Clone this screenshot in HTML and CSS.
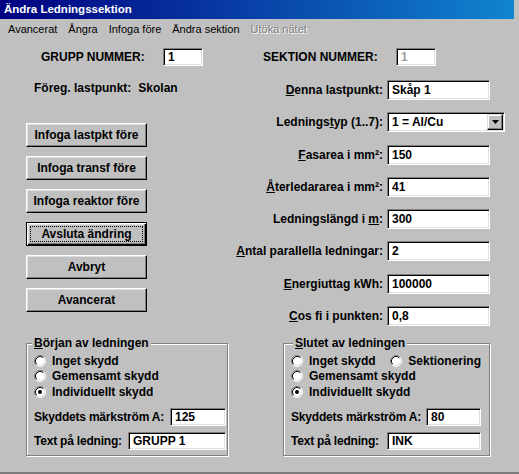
FILE: index.html
```html
<!DOCTYPE html>
<html>
<head>
<meta charset="utf-8">
<link rel="stylesheet" href="styles.css">
</head>
<body>
<div class="window">
  <div class="titlebar">Ändra Ledningssektion</div>
  <div class="menubar">
    <span>Avancerat</span><span>Ångra</span><span>Infoga före</span><span>Ändra sektion</span><span class="disabled">Utöka nätet</span>
  </div>
  <div class="top-row">
    <span class="grupp-lbl">GRUPP NUMMER:</span>
    <div class="field f-num">1</div>
    <span class="sektion-lbl">SEKTION NUMMER:</span>
    <div class="field f-num f-disabled">1</div>
  </div>
  <div class="main">
    <div class="left-col">
      <div class="prev"><span>Föreg. lastpunkt:</span><span class="prev-val">Skolan</span></div>
      <div class="buttons">
        <div class="btn">Infoga lastpkt före</div>
        <div class="btn">Infoga transf före</div>
        <div class="btn">Infoga reaktor före</div>
        <div class="btn btn-default"><span class="focus">Avsluta ändring</span></div>
        <div class="btn">Avbryt</div>
        <div class="btn">Avancerat</div>
      </div>
    </div>
    <div class="form">
      <label><u>D</u>enna lastpunkt:</label><div class="field">Skåp 1</div>
      <label>Lednings<u>t</u>yp (1..7):</label>
      <div class="field combo"><span class="combo-text">1 = Al/Cu</span><span class="arrow"><svg width="7" height="4" viewBox="0 0 7 4"><polygon points="0,0 7,0 3.5,4" fill="#000"/></svg></span></div>
      <label><u>F</u>asarea i mm²:</label><div class="field">150</div>
      <label><u>Å</u>terledararea i mm²:</label><div class="field">41</div>
      <label>Ledningslängd i <u>m</u>:</label><div class="field">300</div>
      <label><u>A</u>ntal parallella ledningar:</label><div class="field">2</div>
      <label><u>E</u>nergiuttag kWh:</label><div class="field">100000</div>
      <label><u>C</u>os fi i punkten:</label><div class="field">0,8</div>
    </div>
  </div>
  <div class="groups">
    <fieldset class="group g-left">
      <legend><u>B</u>örjan av ledningen</legend>
      <div class="radio-row">
        <span class="radio"><svg width="12" height="12" viewBox="0 0 12 12"><circle cx="6" cy="6" r="5" fill="#fff"/><path d="M2.11 9.89A5.5 5.5 0 0 1 9.89 2.11" fill="none" stroke="#808080"/><path d="M9.89 2.11A5.5 5.5 0 0 1 2.11 9.89" fill="none" stroke="#fff"/><path d="M2.82 9.18A4.5 4.5 0 0 1 9.18 2.82" fill="none" stroke="#000"/><path d="M9.18 2.82A4.5 4.5 0 0 1 2.82 9.18" fill="none" stroke="#dfdfdf"/></svg>Inget skydd</span>
      </div>
      <div class="radio-row">
        <span class="radio"><svg width="12" height="12" viewBox="0 0 12 12"><circle cx="6" cy="6" r="5" fill="#fff"/><path d="M2.11 9.89A5.5 5.5 0 0 1 9.89 2.11" fill="none" stroke="#808080"/><path d="M9.89 2.11A5.5 5.5 0 0 1 2.11 9.89" fill="none" stroke="#fff"/><path d="M2.82 9.18A4.5 4.5 0 0 1 9.18 2.82" fill="none" stroke="#000"/><path d="M9.18 2.82A4.5 4.5 0 0 1 2.82 9.18" fill="none" stroke="#dfdfdf"/></svg>Gemensamt skydd</span>
      </div>
      <div class="radio-row">
        <span class="radio"><svg width="12" height="12" viewBox="0 0 12 12"><circle cx="6" cy="6" r="5" fill="#fff"/><path d="M2.11 9.89A5.5 5.5 0 0 1 9.89 2.11" fill="none" stroke="#808080"/><path d="M9.89 2.11A5.5 5.5 0 0 1 2.11 9.89" fill="none" stroke="#fff"/><path d="M2.82 9.18A4.5 4.5 0 0 1 9.18 2.82" fill="none" stroke="#000"/><path d="M9.18 2.82A4.5 4.5 0 0 1 2.82 9.18" fill="none" stroke="#dfdfdf"/><circle cx="6" cy="6" r="2" fill="#000"/></svg>Individuellt skydd</span>
      </div>
      <div class="grow first-grow"><span>Skyddets märkström A:</span><div class="field w-amp-l">125</div></div>
      <div class="grow"><span>Text på ledning:</span><div class="field w-txt-l">GRUPP 1</div></div>
    </fieldset>
    <fieldset class="group g-right">
      <legend><u>S</u>lutet av ledningen</legend>
      <div class="radio-row">
        <span class="radio r-first"><svg width="12" height="12" viewBox="0 0 12 12"><circle cx="6" cy="6" r="5" fill="#fff"/><path d="M2.11 9.89A5.5 5.5 0 0 1 9.89 2.11" fill="none" stroke="#808080"/><path d="M9.89 2.11A5.5 5.5 0 0 1 2.11 9.89" fill="none" stroke="#fff"/><path d="M2.82 9.18A4.5 4.5 0 0 1 9.18 2.82" fill="none" stroke="#000"/><path d="M9.18 2.82A4.5 4.5 0 0 1 2.82 9.18" fill="none" stroke="#dfdfdf"/></svg>Inget skydd</span>
        <span class="radio"><svg width="12" height="12" viewBox="0 0 12 12"><circle cx="6" cy="6" r="5" fill="#fff"/><path d="M2.11 9.89A5.5 5.5 0 0 1 9.89 2.11" fill="none" stroke="#808080"/><path d="M9.89 2.11A5.5 5.5 0 0 1 2.11 9.89" fill="none" stroke="#fff"/><path d="M2.82 9.18A4.5 4.5 0 0 1 9.18 2.82" fill="none" stroke="#000"/><path d="M9.18 2.82A4.5 4.5 0 0 1 2.82 9.18" fill="none" stroke="#dfdfdf"/></svg>Sektionering</span>
      </div>
      <div class="radio-row">
        <span class="radio"><svg width="12" height="12" viewBox="0 0 12 12"><circle cx="6" cy="6" r="5" fill="#fff"/><path d="M2.11 9.89A5.5 5.5 0 0 1 9.89 2.11" fill="none" stroke="#808080"/><path d="M9.89 2.11A5.5 5.5 0 0 1 2.11 9.89" fill="none" stroke="#fff"/><path d="M2.82 9.18A4.5 4.5 0 0 1 9.18 2.82" fill="none" stroke="#000"/><path d="M9.18 2.82A4.5 4.5 0 0 1 2.82 9.18" fill="none" stroke="#dfdfdf"/></svg>Gemensamt skydd</span>
      </div>
      <div class="radio-row">
        <span class="radio"><svg width="12" height="12" viewBox="0 0 12 12"><circle cx="6" cy="6" r="5" fill="#fff"/><path d="M2.11 9.89A5.5 5.5 0 0 1 9.89 2.11" fill="none" stroke="#808080"/><path d="M9.89 2.11A5.5 5.5 0 0 1 2.11 9.89" fill="none" stroke="#fff"/><path d="M2.82 9.18A4.5 4.5 0 0 1 9.18 2.82" fill="none" stroke="#000"/><path d="M9.18 2.82A4.5 4.5 0 0 1 2.82 9.18" fill="none" stroke="#dfdfdf"/><circle cx="6" cy="6" r="2" fill="#000"/></svg>Individuellt skydd</span>
      </div>
      <div class="grow first-grow"><span>Skyddets märkström A:</span><div class="field w-amp-r">80</div></div>
      <div class="grow"><span>Text på ledning:</span><div class="field w-txt-r">INK</div></div>
    </fieldset>
  </div>
</div>
</body>
</html>
```
FILE: styles.css
```css
html, body {
  margin: 0;
  padding: 0;
  background: #c0c0c0;
}
body {
  font-family: "Liberation Sans", Arial, sans-serif;
  font-size: 12px;
  font-weight: bold;
  color: #000;
}
.window {
  width: 519px;
  height: 474px;
  box-sizing: border-box;
  border-bottom: 2px solid #7c7c7c;
  overflow: hidden;
}
.titlebar {
  height: 19px;
  margin-right: 5px;
  padding-left: 4px;
  background: linear-gradient(to right, #000080, #1084d0);
  color: #fff;
  font-size: 11.5px;
  line-height: 19px;
}
.menubar {
  display: flex;
  gap: 11px;
  height: 19px;
  padding-left: 8px;
  font-size: 11px;
  font-weight: normal;
  line-height: 20px;
}
.menubar .disabled {
  color: #808080;
  text-shadow: 1px 1px #fff;
}
.top-row {
  display: flex;
  align-items: center;
  height: 18px;
  margin-top: 10px;
}
.grupp-lbl {
  margin-left: 41px;
  width: 122px;
}
.sektion-lbl {
  margin-left: 60px;
  width: 133px;
}
.field {
  box-sizing: border-box;
  height: 20px;
  padding-left: 4px;
  background: #fff;
  border: 1px solid;
  border-color: #808080 #fff #fff #808080;
  box-shadow: inset 1px 1px #000, inset -1px -1px #dfdfdf;
  line-height: 18px;
  white-space: nowrap;
}
.f-num {
  width: 40px;
  height: 18px;
  line-height: 16px;
}
.f-disabled {
  color: #a0a0a0;
}
.main {
  display: flex;
  margin-top: 14px;
}
.left-col {
  width: 200px;
}
.prev {
  margin: 1px 0 0 34px;
  line-height: 14px;
}
.prev-val {
  margin-left: 7px;
}
.buttons {
  display: flex;
  flex-direction: column;
  gap: 9px;
  margin: 28px 0 0 26px;
}
.btn {
  box-sizing: border-box;
  width: 121px;
  height: 24px;
  border: 1px solid;
  border-color: #fff #000 #000 #fff;
  box-shadow: inset -1px -1px #808080, inset 1px 1px #dfdfdf;
  display: flex;
  align-items: center;
  justify-content: center;
}
.btn-default {
  border-color: #000;
  box-shadow: inset 1px 1px #fff, inset -1px -1px #000, inset -2px -2px #808080, inset 2px 2px #dfdfdf;
  padding: 3px;
  align-items: stretch;
}
.focus {
  flex: 1;
  border: 1px dotted #000;
  display: flex;
  align-items: center;
  justify-content: center;
}
.form {
  display: grid;
  grid-template-columns: 183px 118px;
  grid-auto-rows: 20px;
  column-gap: 4px;
  row-gap: 12.3px;
  align-items: center;
}
.form label {
  text-align: right;
  white-space: nowrap;
}
.form .field {
  width: 103px;
}
.form .combo {
  width: 118px;
  display: flex;
  padding: 0;
}
.combo-text {
  flex: 1;
  padding-left: 4px;
}
.arrow {
  box-sizing: border-box;
  width: 16px;
  height: 16px;
  margin: 1px 1px 1px 0;
  background: #c0c0c0;
  border: 1px solid;
  border-color: #dfdfdf #000 #000 #dfdfdf;
  box-shadow: inset -1px -1px #808080, inset 1px 1px #fff;
  display: flex;
  align-items: center;
  justify-content: center;
}
.groups {
  display: flex;
  margin-top: 10px;
}
.group {
  box-sizing: border-box;
  margin: 0;
  min-width: 0;
  border: 1px solid #808080;
  box-shadow: inset 1px 1px #fff, 1px 1px #fff;
  padding: 3px 1px 5px 7px;
}
.g-left {
  margin-left: 26px;
  width: 202px;
}
.g-right {
  margin-left: 55px;
  width: 207px;
  padding-right: 8px;
}
.group legend {
  padding: 0 2px;
  line-height: 14px;
  background: #c0c0c0;
}
.g-left legend {
  margin-left: -2px;
}
.g-right legend {
  margin-left: 2px;
}
.radio-row {
  display: flex;
  align-items: center;
  height: 15.5px;
}
.radio {
  display: flex;
  align-items: center;
  gap: 6px;
  white-space: nowrap;
}
.radio svg {
  flex: none;
}
.r-first {
  width: 105px;
}
.grow {
  display: flex;
  align-items: center;
  justify-content: space-between;
  margin-top: 6px;
  white-space: nowrap;
}
.grow > span {
  letter-spacing: -0.2px;
}
.grow.first-grow {
  margin-top: 8px;
}
.group .field {
  height: 18px;
  line-height: 16px;
}
.w-amp-l { width: 56px; }
.w-txt-l { width: 98px; }
.w-amp-r { width: 55px; }
.w-txt-r { width: 94px; }
```
